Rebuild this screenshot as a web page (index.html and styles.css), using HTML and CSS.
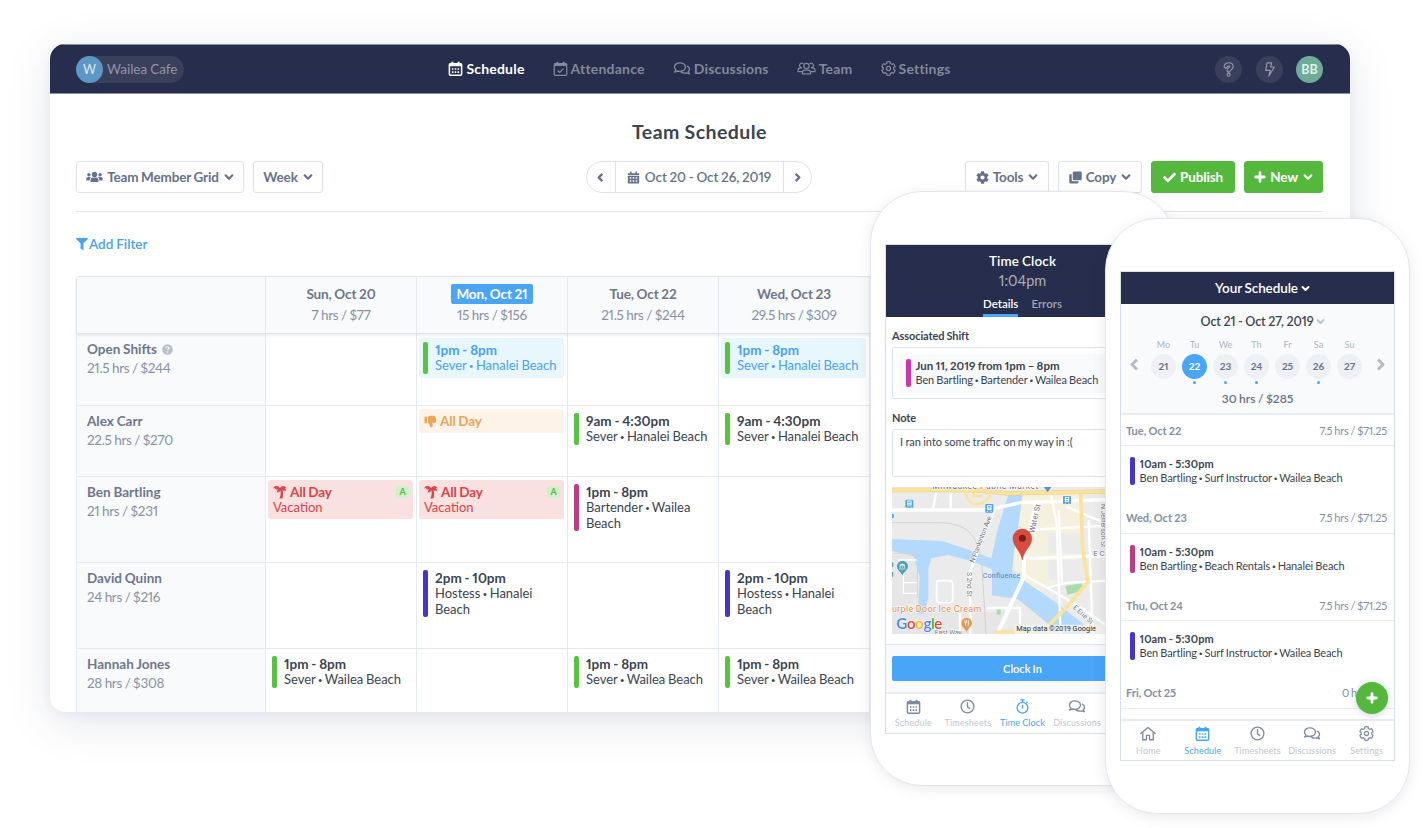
FILE: index.html
```html
<!DOCTYPE html>
<html lang="en">
<head>
<meta charset="utf-8">
<title>Team Schedule</title>
<link rel="stylesheet" href="styles.css">
</head>
<body>
<svg class="sprite" aria-hidden="true">
  <symbol id="i-cal" viewBox="0 0 24 24"><path d="M7 1.2v4M17 1.2v4" stroke="currentColor" stroke-width="3.2" fill="none"/><rect x="2.2" y="4.2" width="19.6" height="18.4" rx="1.8" fill="none" stroke="currentColor" stroke-width="2.4"/><path d="M2 4h20v4.500H2z" fill="currentColor"/><path d="M6.200 12.700h2.600M10.700 12.700h2.600M15.200 12.700h2.600M6.200 17.700h2.600M10.700 17.700h2.600M15.200 17.700h2.600" stroke="currentColor" stroke-width="2.600"/></symbol>
  <symbol id="i-calsolid" viewBox="0 0 24 24"><path d="M7 1v4M17 1v4" stroke="currentColor" stroke-width="3"/><path d="M1.500 4h21v4h-21z M1.500 9.200h21V21a2 2 0 0 1-2 2h-17a2 2 0 0 1-2-2z M5 11.500v3h3v-3z M10.500 11.500v3h3v-3z M16 11.500v3h3v-3z M5 17v3h3v-3z M10.500 17v3h3v-3z M16 17v3h3v-3z" fill="currentColor" fill-rule="evenodd"/></symbol>
  <symbol id="i-calcheck" viewBox="0 0 24 24"><path d="M7 1.200v4M17 1.200v4" stroke="currentColor" stroke-width="3"/><rect x="2" y="4.200" width="20" height="18.600" rx="1.800" fill="none" stroke="currentColor" stroke-width="2"/><path d="M2 4h20v4H2z" fill="currentColor"/><path d="M7.500 15.200l3.200 3 6-6" fill="none" stroke="currentColor" stroke-width="2"/></symbol>
  <symbol id="i-chat" viewBox="0 0 28 24"><path d="M10.500 3C5.500 3 2 6 2 9.700c0 1.800.9 3.400 2.200 4.600-.4 1.300-1.200 2.400-2.200 3.200 2 0 3.800-.6 5-1.500 1.100.3 2.300.5 3.500.5 5 0 9-3 9-6.800S15.500 3 10.500 3z" fill="none" stroke="currentColor" stroke-width="2.200" stroke-linejoin="round"/><path d="M22.500 8.200c2.200 1.100 3.500 2.800 3.500 4.900 0 1.600-.8 3.100-2.100 4.200.4 1.200 1.100 2.200 2.100 3-1.900 0-3.500-.5-4.700-1.400-3.300.9-6.800.2-8.800-1.500" fill="none" stroke="currentColor" stroke-width="2.200" stroke-linejoin="round" stroke-linecap="round"/></symbol>
  <symbol id="i-team" viewBox="0 0 30 24"><g fill="none" stroke="currentColor" stroke-width="1.900"><circle cx="15" cy="8" r="4.300"/><path d="M8.500 20.500v-1.800c0-2.500 1.800-4.200 4-4.200h5c2.200 0 4 1.700 4 4.200v1.800z"/><path d="M9.800 4.300A3.600 3.600 0 1 0 8 10.600M20.200 4.300A3.600 3.600 0 1 1 22 10.600M8.300 17H1.500v-2c0-2.300 1.400-4 3.500-4h3M21.700 17h6.800v-2c0-2.300-1.400-4-3.500-4h-3"/></g></symbol>
  <symbol id="i-users" viewBox="0 0 30 24"><g fill="currentColor"><circle cx="15" cy="7.500" r="4.600"/><circle cx="5.200" cy="8" r="3"/><circle cx="24.800" cy="8" r="3"/><path d="M8 21v-3.500c0-2.800 1.800-4.500 4.200-4.500h5.600c2.400 0 4.200 1.700 4.200 4.500V21zM.5 18v-2.500C.5 13.500 2 12 4 12h3.500c.5 0 1 .1 1.400.3C7.200 13.600 6.500 15.500 6.500 18zM29.500 18v-2.500c0-2-1.500-3.500-3.500-3.500h-3.500c-.5 0-1 .1-1.400.3 1.700 1.300 2.400 3.200 2.400 5.700z"/></g></symbol>
  <symbol id="i-cog" viewBox="0 0 512 512"><path fill="currentColor" d="M487.400 315.700l-42.600-24.600c4.300-23.200 4.300-47 0-70.200l42.600-24.600c4.900-2.800 7.100-8.600 5.500-14-11.100-35.600-30-67.800-54.700-94.600-3.800-4.100-10-5.100-14.800-2.300L380.800 110c-17.900-15.400-38.500-27.300-60.800-35.100V25.800c0-5.600-3.900-10.500-9.400-11.700-36.700-8.200-74.300-7.800-109.200 0-5.500 1.200-9.400 6.100-9.400 11.700V75c-22.200 7.900-42.800 19.800-60.800 35.100L88.700 85.500c-4.900-2.800-11-1.900-14.800 2.300-24.700 26.700-43.600 58.900-54.700 94.600-1.700 5.400.6 11.200 5.500 14L67.300 221c-4.300 23.200-4.300 47 0 70.200l-42.600 24.600c-4.900 2.800-7.100 8.600-5.500 14 11.100 35.600 30 67.800 54.700 94.600 3.800 4.100 10 5.100 14.800 2.300l42.600-24.600c17.900 15.400 38.500 27.300 60.800 35.100v49.200c0 5.600 3.900 10.500 9.400 11.700 36.700 8.200 74.300 7.800 109.200 0 5.500-1.200 9.400-6.100 9.400-11.700v-49.200c22.200-7.900 42.800-19.800 60.800-35.100l42.600 24.600c4.900 2.800 11 1.900 14.800-2.300 24.700-26.700 43.600-58.900 54.700-94.600 1.500-5.500-.7-11.300-5.600-14.100zM256 336c-44.100 0-80-35.900-80-80s35.900-80 80-80 80 35.900 80 80-35.900 80-80 80z"/></symbol>
  <symbol id="i-cogline" viewBox="-16 -16 544 544"><path fill="none" stroke="currentColor" stroke-width="44" d="M487.400 315.700l-42.600-24.600c4.300-23.200 4.300-47 0-70.200l42.600-24.600c4.900-2.800 7.100-8.600 5.500-14-11.100-35.600-30-67.800-54.700-94.600-3.800-4.100-10-5.100-14.800-2.300L380.800 110c-17.900-15.400-38.500-27.300-60.800-35.100V25.800c0-5.600-3.900-10.500-9.400-11.700-36.700-8.200-74.300-7.800-109.200 0-5.500 1.200-9.400 6.100-9.400 11.700V75c-22.200 7.900-42.800 19.800-60.800 35.100L88.700 85.500c-4.900-2.800-11-1.900-14.800 2.300-24.700 26.700-43.600 58.900-54.700 94.600-1.700 5.400.6 11.200 5.500 14L67.300 221c-4.300 23.200-4.300 47 0 70.200l-42.600 24.600c-4.900 2.800-7.100 8.600-5.500 14 11.100 35.600 30 67.800 54.700 94.600 3.800 4.100 10 5.100 14.800 2.300l42.600-24.600c17.900 15.400 38.500 27.300 60.800 35.100v49.200c0 5.600 3.900 10.500 9.400 11.700 36.700 8.200 74.300 7.800 109.200 0 5.500-1.200 9.400-6.100 9.400-11.700v-49.200c22.200-7.900 42.800-19.800 60.800-35.100l42.600 24.600c4.900 2.800 11 1.900 14.800-2.300 24.700-26.700 43.600-58.900 54.700-94.600 1.500-5.500-.7-11.300-5.600-14.100z"/><circle cx="256" cy="256" r="74" fill="none" stroke="currentColor" stroke-width="44"/></symbol>
  <symbol id="i-down" viewBox="0 0 12 12"><path d="M2 4l4 4 4-4" fill="none" stroke="currentColor" stroke-width="2.600" stroke-linecap="round" stroke-linejoin="round"/></symbol>
  <symbol id="i-left" viewBox="0 0 12 12"><path d="M8 2L4 6l4 4" fill="none" stroke="currentColor" stroke-width="2.500" stroke-linejoin="round"/></symbol>
  <symbol id="i-right" viewBox="0 0 12 12"><path d="M4 2l4 4-4 4" fill="none" stroke="currentColor" stroke-width="2.500" stroke-linejoin="round"/></symbol>
  <symbol id="i-clone" viewBox="0 0 24 24"><rect x="7" y="1" width="16.500" height="16" rx="2.200" fill="currentColor"/><path d="M5 6H2.700C1.500 6 .5 7 .5 8.200v12.600c0 1.200 1 2.200 2.200 2.200h12.600c1.200 0 2.200-1 2.200-2.200V19H7a2 2 0 0 1-2-2z" fill="currentColor"/></symbol>
  <symbol id="i-check" viewBox="0 0 512 512"><path fill="currentColor" d="M173.898 439.404l-166.400-166.400c-9.997-9.997-9.997-26.206 0-36.204l36.203-36.204c9.997-9.998 26.207-9.998 36.204 0L192 312.690 432.095 72.596c9.997-9.997 26.207-9.997 36.204 0l36.203 36.204c9.997 9.997 9.997 26.206 0 36.204l-294.400 294.401c-9.998 9.997-26.207 9.997-36.204-.001z"/></symbol>
  <symbol id="i-plus" viewBox="0 0 12 12"><path d="M6 1.700v8.600M1.700 6h8.600" stroke="currentColor" stroke-width="2.800" stroke-linecap="round"/></symbol>
  <symbol id="i-filter" viewBox="0 0 512 512"><path fill="currentColor" d="M487.976 0H24.028C2.710 0-8.047 25.866 7.058 40.971L192 225.941V432c0 7.831 3.821 15.170 10.237 19.662l80 55.980C298.020 518.690 320 507.493 320 487.980V225.941l184.947-184.970C520.021 25.896 509.338 0 487.976 0z"/></symbol>
  <symbol id="i-help" viewBox="0 0 24 24"><circle cx="12" cy="12" r="11.500" fill="currentColor"/><path d="M8.500 9.300c.3-2 1.700-3.100 3.600-3.100 2 0 3.500 1.200 3.500 3 0 2.300-3.400 2.500-3.400 4.600" fill="none" stroke="#f8fafc" stroke-width="2.300"/><circle cx="12.100" cy="17.300" r="1.700" fill="#f8fafc"/></symbol>
  <symbol id="i-question" viewBox="0 0 24 24"><g fill="none" stroke="currentColor" stroke-width="7" stroke-linecap="round"><path d="M7.500 7c.8-2.200 2.500-3.200 4.700-3.200 2.800 0 4.600 1.500 4.600 3.600 0 3-4.600 3.200-4.600 6.100"/></g><path d="M7.500 7c.8-2.200 2.500-3.200 4.700-3.200 2.800 0 4.600 1.500 4.600 3.600 0 3-4.600 3.200-4.600 6.100" fill="none" stroke="#3a3f5b" stroke-width="3.400" stroke-linecap="round"/><circle cx="12.200" cy="20.300" r="2.500" fill="#3a3f5b" stroke="currentColor" stroke-width="1.800"/></symbol>
  <symbol id="i-bolt" viewBox="0 0 24 24"><path d="M8 1.500h7.500L13.800 8h6L11 22.500l2-9H6z" fill="none" stroke="currentColor" stroke-width="1.900" stroke-linejoin="round"/></symbol>
  <symbol id="i-palm" viewBox="0 0 24 24"><path fill="currentColor" d="M12 5.500C10.500 2.500 7.500 1 4.500 1.800 2.400 2.300.9 4 .5 6l3-1.200-.8 2.700 3.200-1.700-.4 2.400L9 7.200c-1.700 1.400-2.700 3.500-2.300 6l2.800-1.600.2 1.700 2.800-4.500c1.400 4.600.7 9.700-1.500 14.200h5c1.700-4.800 1.800-9.800.3-14.300l3 2 .3-1.800 3 1.800c.4-2.300-1-4.300-3.300-5 1.300-.3 2.500-.1 3.900.6C22.200 3 19.500 1.500 16.500 2c-2 .4-3.500 1.700-4.500 3.500z"/></symbol>
  <symbol id="i-thumb" viewBox="0 0 24 24"><path fill="currentColor" d="M1 3h4.500v12H1zM7 3.500C9 2 11 1.500 14 1.500h4c1.800 0 3 1.200 2.600 2.800 1.300.6 1.700 2 1.200 3.200 1.200.9 1.300 2.300.6 3.400.4 2-.8 3.600-2.600 3.600h-4.500c.3 2 1 3.500.8 5.500-.2 1.700-1.200 3-2.900 3-1.500 0-1.900-2-2.300-3.700C10.300 17 8.500 16 7 14.500z"/></symbol>
  <symbol id="i-clock" viewBox="0 0 24 24"><circle cx="12" cy="12" r="10.200" fill="none" stroke="currentColor" stroke-width="2.200"/><path d="M12 6v6.500l3.400 2.800" fill="none" stroke="currentColor" stroke-width="2.200" stroke-linecap="round"/></symbol>
  <symbol id="i-stopwatch" viewBox="0 0 24 24"><g fill="none" stroke="currentColor" stroke-width="2.200"><circle cx="12" cy="14" r="8.600"/><path d="M8.500 1.300h7M12 1.500v4M18 6.500l2-2M12 9.500v5.500"/></g></symbol>
  <symbol id="i-home" viewBox="0 0 26 24"><path d="M1.500 12L13 2.500 24.500 12M4.500 10v12h6v-7h5v7h6V10" fill="none" stroke="currentColor" stroke-width="2.200" stroke-linejoin="round" stroke-linecap="round"/></symbol>
</svg>

<main class="window">
  <header class="navbar">
    <div class="org"><span class="avatar org-avatar">W</span><span class="org-name">Wailea Cafe</span></div>
    <nav class="menu">
      <a class="menu-item active"><svg class="ic15"><use href="#i-cal"/></svg><span>Schedule</span></a>
      <a class="menu-item"><svg class="ic15"><use href="#i-calcheck"/></svg><span>Attendance</span></a>
      <a class="menu-item"><svg class="ic-chat"><use href="#i-chat"/></svg><span>Discussions</span></a>
      <a class="menu-item"><svg class="ic-team"><use href="#i-team"/></svg><span>Team</span></a>
      <a class="menu-item"><svg class="ic15"><use href="#i-cogline"/></svg><span>Settings</span></a>
    </nav>
    <div class="actions">
      <span class="avatar round"><svg class="ic15"><use href="#i-question"/></svg></span>
      <span class="avatar round"><svg class="ic15"><use href="#i-bolt"/></svg></span>
      <span class="avatar me">BB</span>
    </div>
  </header>

  <section class="content">
    <h1 class="title">Team Schedule</h1>
    <div class="toolbar">
      <div class="group">
        <button class="btn b-grid"><svg class="ic-users"><use href="#i-users"/></svg><span>Team Member Grid</span><svg class="ic-down"><use href="#i-down"/></svg></button>
        <button class="btn b-week"><span>Week</span><svg class="ic-down"><use href="#i-down"/></svg></button>
      </div>
      <div class="pager">
        <span class="pager-arrow"><svg class="ic10"><use href="#i-left"/></svg></span>
        <span class="pager-range"><svg class="ic13"><use href="#i-calsolid"/></svg><span>Oct 20 - Oct 26, 2019</span></span>
        <span class="pager-arrow"><svg class="ic10"><use href="#i-right"/></svg></span>
      </div>
      <div class="group group-right">
        <button class="btn b-tools"><svg class="ic13"><use href="#i-cog"/></svg><span>Tools</span><svg class="ic-down"><use href="#i-down"/></svg></button>
        <button class="btn b-copy"><svg class="ic13"><use href="#i-clone"/></svg><span>Copy</span><svg class="ic-down"><use href="#i-down"/></svg></button>
        <button class="btn green b-publish"><svg class="ic13"><use href="#i-check"/></svg><span>Publish</span></button>
        <button class="btn green b-new"><svg class="ic12"><use href="#i-plus"/></svg><span>New</span><svg class="ic-down"><use href="#i-down"/></svg></button>
      </div>
    </div>
    <div class="filter"><svg class="ic12"><use href="#i-filter"/></svg><span>Add Filter</span></div>

    <div class="grid">
      <div class="row head">
        <div class="label"></div>
        <div class="day"><b>Sun, Oct 20</b><small>7 hrs / $77</small></div>
        <div class="day today"><b>Mon, Oct 21</b><small>15 hrs / $156</small></div>
        <div class="day"><b>Tue, Oct 22</b><small>21.5 hrs / $244</small></div>
        <div class="day"><b>Wed, Oct 23</b><small>29.5 hrs / $309</small></div>
        <div class="day"></div><div class="day"></div><div class="day"></div>
      </div>
      <div class="row open">
        <div class="label"><b>Open Shifts <svg class="ic-help"><use href="#i-help"/></svg></b><small>21.5 hrs / $244</small></div>
        <div class="cell"></div>
        <div class="cell"><div class="shift available"><i class="bar lime"></i><div><b>1pm - 8pm</b><p>Sever <i class="sep">•</i> Hanalei Beach</p></div></div></div>
        <div class="cell"></div>
        <div class="cell"><div class="shift available"><i class="bar lime"></i><div><b>1pm - 8pm</b><p>Sever <i class="sep">•</i> Hanalei Beach</p></div></div></div>
        <div class="cell"></div><div class="cell"></div><div class="cell"></div>
      </div>
      <div class="row alex">
        <div class="label"><b>Alex Carr</b><small>22.5 hrs / $270</small></div>
        <div class="cell"></div>
        <div class="cell"><div class="off dislike"><b><svg class="ic13"><use href="#i-thumb"/></svg>All Day</b></div></div>
        <div class="cell"><div class="shift"><i class="bar lime"></i><div><b>9am - 4:30pm</b><p>Sever <i class="sep">•</i> Hanalei Beach</p></div></div></div>
        <div class="cell"><div class="shift"><i class="bar lime"></i><div><b>9am - 4:30pm</b><p>Sever <i class="sep">•</i> Hanalei Beach</p></div></div></div>
        <div class="cell"></div><div class="cell"></div><div class="cell"></div>
      </div>
      <div class="row ben">
        <div class="label"><b>Ben Bartling</b><small>21 hrs / $231</small></div>
        <div class="cell"><div class="off vacation"><b><svg class="ic14"><use href="#i-palm"/></svg>All Day<em>A</em></b><p>Vacation</p></div></div>
        <div class="cell"><div class="off vacation"><b><svg class="ic14"><use href="#i-palm"/></svg>All Day<em>A</em></b><p>Vacation</p></div></div>
        <div class="cell"><div class="shift"><i class="bar magenta"></i><div><b>1pm - 8pm</b><p>Bartender <i class="sep">•</i> Wailea<br>Beach</p></div></div></div>
        <div class="cell"></div>
        <div class="cell"></div><div class="cell"></div><div class="cell"></div>
      </div>
      <div class="row david">
        <div class="label"><b>David Quinn</b><small>24 hrs / $216</small></div>
        <div class="cell"></div>
        <div class="cell"><div class="shift"><i class="bar violet"></i><div><b>2pm - 10pm</b><p>Hostess <i class="sep">•</i> Hanalei<br>Beach</p></div></div></div>
        <div class="cell"></div>
        <div class="cell"><div class="shift"><i class="bar violet"></i><div><b>2pm - 10pm</b><p>Hostess <i class="sep">•</i> Hanalei<br>Beach</p></div></div></div>
        <div class="cell"></div><div class="cell"></div><div class="cell"></div>
      </div>
      <div class="row hannah">
        <div class="label"><b>Hannah Jones</b><small>28 hrs / $308</small></div>
        <div class="cell"><div class="shift"><i class="bar lime"></i><div><b>1pm - 8pm</b><p>Sever <i class="sep">•</i> Wailea Beach</p></div></div></div>
        <div class="cell"></div>
        <div class="cell"><div class="shift"><i class="bar lime"></i><div><b>1pm - 8pm</b><p>Sever <i class="sep">•</i> Wailea Beach</p></div></div></div>
        <div class="cell"><div class="shift"><i class="bar lime"></i><div><b>1pm - 8pm</b><p>Sever <i class="sep">•</i> Wailea Beach</p></div></div></div>
        <div class="cell"></div><div class="cell"></div><div class="cell"></div>
      </div>
    </div>
  </section>
</main>

<article class="phone phone-clock">
  <div class="screen">
    <header class="clock-head">
      <h2>Time Clock</h2>
      <p class="time">1:04pm</p>
      <div class="subtabs"><span class="on">Details</span><span>Errors</span></div>
    </header>
    <div class="clock-body">
      <h3>Associated Shift</h3>
      <div class="box shift-box"><div class="shift-inner"><i class="bar pink"></i><div><b>Jun 11, 2019 from 1pm – 8pm</b><p>Ben Bartling <i class="sep">•</i> Bartender <i class="sep">•</i> Wailea Beach</p></div></div></div>
      <h3>Note</h3>
      <div class="box note">I ran into some traffic on my way in :(</div>
      <svg class="map" viewBox="36 21 783 441">
        <rect x="36" y="21" width="783" height="441" fill="#ebebeb"/>
        <path d="M430 40h170l8 180-50 70-90 50-60-60-8-60z" fill="#f6f1df"/>
        <path d="M505 160h100v60H505zM505 240h110v60H505z" fill="#ebebeb"/>
        <path d="M36 225h72l8 140-80 20zM40 395h330v67H36z" fill="#e6e6e6"/>
        <path d="M386 40h42l-12 90-16 90-4 58 130 88 140 110h-108L414 358l-78-12v-78l-66-26-66-17-50 10-9 30v90l-14 46h-18l6-110-18-62-65-16v-36l150 6 76 25 72 27 20-90z" fill="#b3dafc"/>
        <path d="M556 318l50-8v22l-44 12zM350 388h12v16h-12z" fill="#a9dcab"/>
        <path d="M424 142l-12 0-16 110-4 22 34 8" fill="none" stroke="#b7dcb2" stroke-width="2"/>
        <path d="M36 128h130c80 0 130 20 140 130l12 204M40 220h72v130" fill="none" stroke="#d0d2d6" stroke-width="3"/>
        <g fill="none" stroke="#fff">
          <path d="M36 90h285l100-22 278-10" stroke-width="10"/>
          <path d="M212 40v50M170 30l-12 60M345 88l-46 112-28 70v192M510 30l20 100 12 332M536 90l10 220M440 150l260-14M560 80l140 60M626 120l12 342" stroke-width="7"/>
          <path d="M470 60l-24 110-14 70v50l-80 172" stroke-width="12"/>
          <path d="M436 236l264-10" stroke-width="10"/>
          <path d="M432 284l92 52 90 54 86 62M505 322l60-14 120-6M320 384h100v60M240 400v60M430 440h110" stroke-width="7"/>
          <rect x="170" y="302" width="48" height="66" rx="8" stroke-width="5"/>
          <path d="M56 240h54M70 270v70h42M70 308h42" stroke-width="4"/>
        </g>
        <g fill="none" stroke="#e9cf7c" stroke-width="13"><path d="M36 30h240l110 10 313-6"/></g>
        <g fill="none" stroke="#fbe49a">
          <path d="M36 30h240l110 10 313-6" stroke-width="10"/>
          <path d="M255 26c0 28 15 46 36 46s40-18 44-40M280 24v24h26" stroke-width="8"/>
          <path d="M602 42l6 168 16 96-74 86-70 70M345 456h145" stroke-width="11"/>
        </g>
        <g font-family="Roboto, sans-serif" font-size="23" fill="#6e747c" stroke="#fff" stroke-width="3" paint-order="stroke">
          <text x="157" y="27" font-size="25" fill="#5d6f86" textLength="318">Milwaukee Public Market</text>
          <text transform="translate(282 250) rotate(-69)" font-size="21" textLength="148">N Plankinton Ave</text>
          <text transform="translate(462 160) rotate(-77)" textLength="88">Water St</text>
          <text transform="translate(262 276) rotate(90)" font-size="20" textLength="74">S 2nd St</text>
          <text transform="translate(664 72) rotate(90)" font-size="21" textLength="130">N Jefferson St</text>
          <text transform="translate(578 384) rotate(42)" font-size="20" textLength="74">E Erie St</text>
          <text x="640" y="228">E Clybourn St</text>
          <text x="164" y="465" font-size="20">East Way</text>
          <text x="308" y="294" fill="#4f83c4" stroke="none" font-size="21" textLength="113">Confluence</text>
          <text x="36" y="397" fill="#dc8c52" font-size="27" textLength="268">urple Door Ice Cream</text>
        </g>
        <g fill="#4ba3f2"><rect x="76" y="59" width="24" height="24" rx="3"/><rect x="316" y="72" width="24" height="26" rx="3"/><rect x="549" y="48" width="24" height="24" rx="3"/><path d="M492 21h22l-11 16z" fill="#5a8ce8"/><circle cx="34" cy="108" r="8"/></g>
        <g fill="none" stroke="#fff" stroke-width="3"><rect x="83" y="63" width="10" height="12"/><rect x="323" y="77" width="10" height="12"/><rect x="556" y="52" width="10" height="12"/><path d="M83 70h10M323 84h10M556 59h10M84 79l-2 3M92 79l2 3M324 93l-2 3M332 93l2 3M557 68l-2 3M565 68l2 3"/></g>
        <path d="M67 287c-4-12-16-16-16-28a16.500 16.500 0 0 1 33 0c0 12-13 16-17 28z" fill="#46a4b5"/>
        <path d="M59 256l8-5 8 5zM60 258v7M67 258v7M74 258v7M58 267h18" fill="#fff" stroke="#fff" stroke-width="2"/>
        <path d="M38 247v14M38 276v14" stroke="#3d8f9e" stroke-width="3"/>
        <path d="M260 457c-4-12-16-15-16-28a16 16 0 0 1 32 0c0 13-13 16-16 28z" fill="#e99a56"/>
        <path d="M255 421v6c0 4 4 4 4 0v-6M257 430v7M265 421v16" fill="none" stroke="#fff" stroke-width="2.500"/>
        <path d="M427 240c-3-27-28-40-28-65a28 28 0 0 1 56 0c0 25-25 38-28 65z" fill="#dc4a3f" stroke="#b8352c" stroke-width="1.500"/>
        <circle cx="427" cy="175" r="10.500" fill="#7b1f1a"/>
        <rect x="403" y="434" width="290" height="28" fill="#f3f3f3" opacity=".75"/>
        <text x="409" y="454" font-family="Roboto, sans-serif" font-size="22" fill="#333" textLength="239">Map data ©2019 Google</text>
        <text x="49" y="446" font-family="Lato, sans-serif" font-size="45" font-weight="600" stroke="#fff" stroke-width="3" paint-order="stroke" textLength="138"><tspan fill="#4285f4">G</tspan><tspan fill="#ea4335">o</tspan><tspan fill="#fbbc05">o</tspan><tspan fill="#4285f4">g</tspan><tspan fill="#34a853">l</tspan><tspan fill="#ea4335">e</tspan></text>
      </svg>
    </div>
    <div class="clock-action"><button class="clock-btn">Clock In</button></div>
    <nav class="tabbar">
      <span><svg class="t-ic"><use href="#i-cal"/></svg>Schedule</span>
      <span><svg class="t-ic"><use href="#i-clock"/></svg>Timesheets</span>
      <span class="on"><svg class="t-ic"><use href="#i-stopwatch"/></svg>Time Clock</span>
      <span><svg class="t-ic wide"><use href="#i-chat"/></svg>Discussions</span>
      <span></span>
    </nav>
  </div>
</article>

<article class="phone phone-schedule">
  <div class="screen">
    <header class="sched-head"><span>Your Schedule</span><svg class="ic9"><use href="#i-down"/></svg></header>
    <section class="week">
      <div class="week-range"><span>Oct 21 - Oct 27, 2019</span><svg class="ic9"><use href="#i-down"/></svg></div>
      <div class="week-days">
        <svg class="week-arrow"><use href="#i-left"/></svg>
        <div class="wd"><small>Mo</small><b>21</b></div>
        <div class="wd sel dot"><small>Tu</small><b>22</b></div>
        <div class="wd dot"><small>We</small><b>23</b></div>
        <div class="wd dot"><small>Th</small><b>24</b></div>
        <div class="wd"><small>Fr</small><b>25</b></div>
        <div class="wd dot"><small>Sa</small><b>26</b></div>
        <div class="wd"><small>Su</small><b>27</b></div>
        <svg class="week-arrow"><use href="#i-right"/></svg>
      </div>
      <p class="week-total">30 hrs / $285</p>
    </section>
    <section class="agenda">
      <div class="ag-day"><b>Tue, Oct 22</b><span>7.5 hrs / $71.25</span></div>
      <div class="ag-shift"><i class="bar violet"></i><div><b>10am - 5:30pm</b><p>Ben Bartling <i class="sep">•</i> Surf Instructor <i class="sep">•</i> Wailea Beach</p></div></div>
      <div class="ag-day"><b>Wed, Oct 23</b><span>7.5 hrs / $71.25</span></div>
      <div class="ag-shift"><i class="bar magenta"></i><div><b>10am - 5:30pm</b><p>Ben Bartling <i class="sep">•</i> Beach Rentals <i class="sep">•</i> Hanalei Beach</p></div></div>
      <div class="ag-day"><b>Thu, Oct 24</b><span>7.5 hrs / $71.25</span></div>
      <div class="ag-shift"><i class="bar violet"></i><div><b>10am - 5:30pm</b><p>Ben Bartling <i class="sep">•</i> Surf Instructor <i class="sep">•</i> Wailea Beach</p></div></div>
      <div class="ag-day"><b>Fri, Oct 25</b><span>0 hrs / $0</span></div>
    </section>
    <button class="fab"><svg><use href="#i-plus"/></svg></button>
    <nav class="tabbar">
      <span><svg class="t-ic wide"><use href="#i-home"/></svg>Home</span>
      <span class="on"><svg class="t-ic"><use href="#i-cal"/></svg>Schedule</span>
      <span><svg class="t-ic"><use href="#i-clock"/></svg>Timesheets</span>
      <span><svg class="t-ic wide"><use href="#i-chat"/></svg>Discussions</span>
      <span><svg class="t-ic"><use href="#i-cogline"/></svg>Settings</span>
    </nav>
  </div>
</article>
</body>
</html>
```

FILE: styles.css
```css
* { box-sizing: border-box; }
body {
  margin: 0; width: 1423px; height: 828px; overflow: hidden; position: relative;
  background: #fff; color: #3b4453;
  font-family: Lato, "Open Sans", sans-serif; font-size: 13.5px; letter-spacing: 0; word-spacing: -.5px;
  font-variant-numeric: proportional-nums;
}
p, h1, h2, h3 { margin: 0; }
b { font-weight: 700; }
small { font-size: inherit; }
button { font: inherit; font-variant-numeric: inherit; letter-spacing: inherit; word-spacing: inherit; padding: 0; margin: 0; }
svg { display: block; flex: none; }
.sprite { position: absolute; width: 0; height: 0; }
.sep { font-family: "Liberation Sans", sans-serif; font-style: normal; font-size: .85em; line-height: 0; vertical-align: .5px; }

.ic9 { width: 9px; height: 9px; }
.ic10 { width: 11px; height: 11px; }
.ic12 { width: 12px; height: 12px; }
.ic13 { width: 13px; height: 13px; }
.ic14 { width: 14px; height: 14px; }
.ic15 { width: 15px; height: 15px; }
.ic-chat { width: 18px; height: 15px; }
.ic-team { width: 19px; height: 15px; }
.ic-users { width: 17px; height: 14px; }
.ic-down { width: 10px; height: 10px; }

/* main window */
.window {
  margin: 44px 0 0 50px; width: 1300px; height: 668px; overflow: hidden;
  background: #fff; border-radius: 15px;
  box-shadow: 0 10px 45px rgba(50, 60, 110, .13), 0 3px 12px rgba(50, 60, 110, .05);
}
.navbar {
  height: 50px; padding: 0 27px 0 26px; background: #272d4c; border: solid #8b8fa1; border-width: 1px 0;
  display: grid; grid-template-columns: 1fr auto 1fr; align-items: center;
}
.avatar {
  width: 27px; height: 27px; border-radius: 50%; flex: none;
  display: flex; align-items: center; justify-content: center;
}
.org {
  width: 108px; height: 27px; border-radius: 14px; background: #3a3f5b;
  display: flex; align-items: center; gap: 4px; color: #9094a5; white-space: nowrap;
}
.org-avatar { background: #5d97c6; color: #dfebf4; font-size: 12.5px; }
.menu { display: flex; gap: 28px; padding-bottom: 1px; font-size: 14px; font-weight: 700; letter-spacing: .2px; color: #83889a; }
.menu-item { display: flex; align-items: center; gap: 3px; white-space: nowrap; }
.menu-item.active { color: #fff; }
.actions { display: flex; gap: 13.500px; justify-content: flex-end; }
.round { background: #3a3f5b; color: #959aa8; }
.me { background: #6fab99; color: #e0efea; font-weight: 700; font-size: 12.500px; }

.content { padding: 0 27px 0 26px; }
.title { margin-top: 26px; height: 24px; line-height: 24px; text-align: center; font-size: 19.500px; letter-spacing: .45px; font-weight: 700; color: #3b4450; }
.toolbar {
  margin-top: 17px; padding-bottom: 18px; height: 51px; border-bottom: 1px solid #e3e7ed;
  display: grid; grid-template-columns: 1fr auto 1fr;
}
.group { display: flex; gap: 9px; }
.group-right { justify-content: flex-end; }
.btn {
  height: 32px; border: 1px solid #dde2ea; border-radius: 3px; background: #fff; color: #66728a; font-weight: 700;
  display: flex; align-items: center; justify-content: center; gap: 4px; white-space: nowrap; letter-spacing: -.15px;
}
.btn .ic-down { margin-left: 1px; }
.green { background: #54b83d; border-color: #54b83d; color: #fff; }
.b-grid { width: 168px; }
.b-week { width: 70px; }
.b-tools { width: 84px; }
.b-copy { width: 84px; }
.b-publish { width: 84px; }
.b-new { width: 79px; }
.pager { height: 32px; width: 226px; margin-left: -1px; border: 1px solid #dde2ea; border-radius: 16px; display: flex; color: #66728a; font-weight: 600; letter-spacing: -.1px; }
.pager-arrow { flex: 1; display: flex; align-items: center; justify-content: center; }
.pager-range { width: 169px; border: solid #dde2ea; border-width: 0 1px; display: flex; align-items: center; justify-content: center; gap: 5px; white-space: nowrap; }
.filter { margin-top: 22px; height: 20px; display: flex; align-items: center; gap: 1px; color: #46a2f5; font-weight: 600; }

/* schedule grid */
.grid { margin-top: 22px; border-top: 1px solid #e5e9f0; border-left: 1px solid #e5e9f0; border-radius: 4px 0 0 0; }
.row { display: grid; grid-template-columns: 189px repeat(7, 151px); height: 86px; border-bottom: 1px solid #e5e9f0; }
.row > div { border-right: 1px solid #e5e9f0; }
.head { height: 57px; background: #f8fafc; border-bottom: 1px solid #e0e5ec; box-shadow: 0 1px 3px rgba(80, 95, 120, .14); position: relative; }
.open { height: 72px; }
.alex { height: 71px; }
.day { display: flex; flex-direction: column; align-items: center; padding-top: 7px; color: #6d778c; }
.day b { height: 20px; line-height: 20px; padding: 0 5px; border-radius: 2px; letter-spacing: -.1px; }
.day small, .label small { letter-spacing: -.3px; }
.day small { margin-top: 1px; line-height: 20px; color: #8892a5; }
.today b { background: #49a5f8; color: #fff; }
.label { background: #f8fafc; padding: 6px 0 0 10px; color: #6d778c; }
.label b, .label small { display: flex; align-items: center; height: 19px; line-height: 19px; }
.label small { color: #8892a5; }
.ic-help { width: 11px; height: 11px; margin-left: 5px; color: #b9c0ca; }
.cell { padding: 3px 3px 0 2px; }
.open .cell { padding-top: 4px; }
.shift { display: flex; gap: 7px; padding: 4px 0 4px 4px; border-radius: 3px; line-height: 16px; white-space: nowrap; }
.shift b { display: block; }
.shift p { line-height: 15.500px; font-size: 13px; letter-spacing: -.03px; }
.bar { width: 5px; border-radius: 2px; flex: none; }
.lime { background: #57c43d; }
.magenta { background: #c23a83; }
.violet { background: #4733d0; }
.pink { background: #cf33b4; }
.available { background: #e8f6fe; color: #46a2f5; }
.off { border-radius: 3px; padding: 4px 4px 4px 5px; line-height: 16px; }
.off b { display: flex; align-items: center; gap: 3px; letter-spacing: -.15px; }
.off p { font-size: 13px; line-height: 15px; }
.dislike { background: #fdf3e8; color: #eda557; }
.vacation { background: #f9e0e1; color: #dc4446; }
.vacation em { margin-left: auto; width: 13px; height: 12px; line-height: 12px; border-radius: 2px; background: #d0f0cc; color: #52bd3d; font-style: normal; font-size: 9px; text-align: center; }

/* phones overlap the window */
.phone {
  position: absolute; width: 305px; height: 595px; padding: 52px 14px 0; background: #fff;
  border: 1px solid #e3e6ee; border-radius: 52px; box-shadow: 0 3px 14px rgba(50, 60, 90, .1);
}
.phone-clock { left: 870px; top: 191px; }
.phone-schedule { left: 1105px; top: 218px; height: 596px; }
.screen { width: 275px; height: 490px; border: 1px solid #d7dee8; position: relative; display: flex; flex-direction: column; overflow: hidden; }
.clock-head { height: 72px; flex: none; background: #272d4c; color: #fff; text-align: center; padding-top: 7px; }
.clock-head h2 { font-size: 13.500px; line-height: 18px; font-weight: 600; letter-spacing: .1px; }
.time { font-size: 14.500px; line-height: 22px; color: #a9adbb; }
.subtabs { display: flex; justify-content: center; gap: 13px; font-size: 11.500px; font-weight: 600; color: #a0a4b4; margin-top: 4px; }
.subtabs span { height: 21px; line-height: 16px; }
.subtabs .on { color: #fff; border-bottom: 3px solid #49a5f8; }
.clock-body { height: 327px; flex: none; padding: 11px 6px 0 6px; font-size: 11px; }
.clock-body h3 { font-size: 11px; line-height: 16px; font-weight: 700; letter-spacing: -.1px; }
.box { width: 261px; border: 1px solid #dbe3ec; border-radius: 2px; }
.shift-box { height: 52px; margin: 3px 0 11px; padding: 6px 7px; }
.shift-inner { height: 39px; background: #f8fafc; display: flex; gap: 5px; padding: 5px 0 5px 6px; line-height: 14px; white-space: nowrap; }
.shift-inner b { display: block; font-size: 11.500px; }
.shift-inner p, .ag-shift p { letter-spacing: -.12px; }
.note { height: 48px; margin: 3px 0 10px; padding: 3px 7px; line-height: 18px; }
.map { width: 261px; height: 147px; }
.clock-action { height: 48px; flex: none; background: #f8fafc; border-top: 1px solid #dbe3ec; padding: 11px 6px; }
.clock-btn { display: block; width: 261px; height: 25px; border: 0; border-radius: 2px; background: #49a5f8; color: #fff; font-size: 11px; font-weight: 600; }
.tabbar {
  margin-top: auto; height: 41px; flex: none; background: #fff; border-top: 2px solid #e8edf3; padding-top: 5px;
  display: grid; grid-template-columns: repeat(5, 1fr); font-size: 9px; letter-spacing: .15px; color: #c0c6cf;
}
.tabbar span { display: flex; flex-direction: column; align-items: center; gap: 3px; line-height: 12px; white-space: nowrap; }
.phone-schedule .tabbar span { gap: 4px; }
.tabbar .on { color: #49a5f8; }
.t-ic { width: 15px; height: 15px; color: #7f8ba0; }
.wide { width: 18px; }
.on .t-ic { color: #49a5f8; }

.sched-head { height: 32px; flex: none; background: #272d4c; color: #fff; font-weight: 600; letter-spacing: -.1px; display: flex; align-items: center; justify-content: center; gap: 3px; padding-left: 10px; }
.week { height: 111px; flex: none; background: #f8fafc; border-bottom: 2px solid #e8edf3; padding-top: 7px; }
.week-range { height: 20px; display: flex; align-items: center; justify-content: center; gap: 2px; padding-left: 10px; font-size: 12.500px; font-weight: 600; letter-spacing: -.05px; }
.week-range svg { color: #bcc4cf; }
.week-days { display: flex; align-items: center; padding: 0 6px; height: 53px; margin-top: 1px; }
.week-arrow { width: 15px; height: 15px; color: #b5bcc9; margin-top: 12px; }
.wd { width: 31px; display: flex; flex-direction: column; align-items: center; gap: 3px; position: relative; }
.week-days .wd:nth-of-type(1) { margin-left: 6px; }
.week-days .week-arrow:last-child { margin-left: auto; }
.wd small { font-size: 9px; line-height: 13px; color: #abb4c1; }
.wd b { width: 25px; height: 25px; line-height: 25px; border-radius: 50%; background: #edf0f5; color: #66728a; text-align: center; font-size: 10px; }
.wd.sel b { background: #49a5f8; color: #fff; }
.dot::after { content: ""; position: absolute; bottom: -5px; width: 3px; height: 3px; border-radius: 50%; background: #49a5f8; }
.week-total { text-align: center; font-size: 12px; font-weight: 600; line-height: 16px; color: #66728a; margin-top: 6px; }
.agenda { height: 304px; overflow: hidden; font-size: 11px; }
.ag-day { height: 31px; border-bottom: 1px solid #e8edf3; padding: 0 7px 0 5px; display: flex; align-items: center; justify-content: space-between; color: #8490a3; }
.ag-day span { letter-spacing: -.25px; }
.ag-shift { height: 56.500px; padding: 11px 0 0 9px; display: flex; gap: 5px; line-height: 14px; align-items: flex-start; white-space: nowrap; }
.ag-shift .bar, .shift-inner .bar { width: 4.500px; height: 28px; }
.ag-shift b { display: block; letter-spacing: .1px; }
.fab { position: absolute; right: 6px; bottom: 46px; width: 32px; height: 32px; border: 0; border-radius: 50%; background: #54b83d; color: #fff; display: flex; align-items: center; justify-content: center; box-shadow: 0 1px 7px rgba(50, 60, 90, .25); }
.fab svg { width: 12px; height: 12px; }
```
